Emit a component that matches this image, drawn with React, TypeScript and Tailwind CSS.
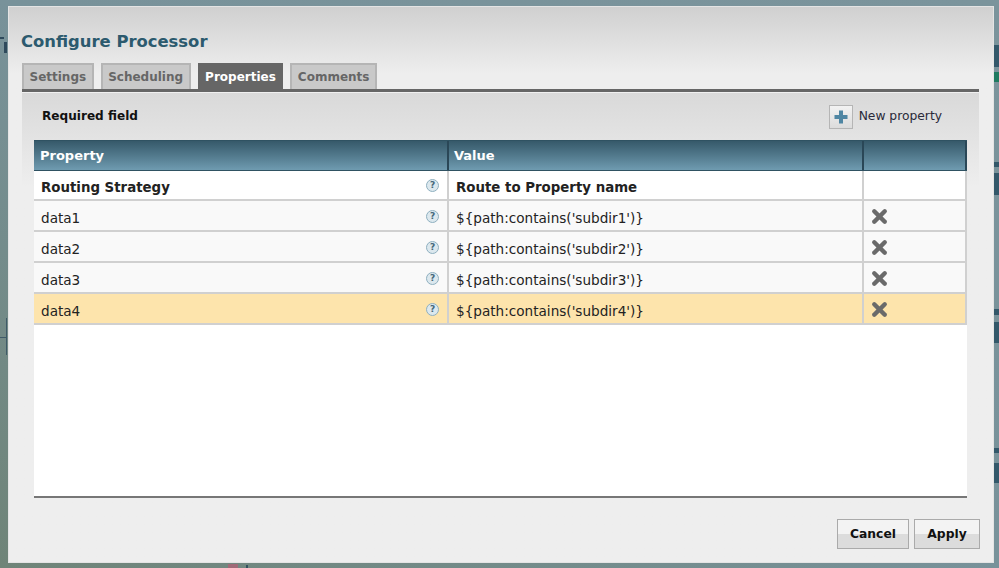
import React from 'react';
import { X } from 'lucide-react';

const font = "font-['DejaVu_Sans',sans-serif]";

const rows = [
  { name: 'data1', value: "${path:contains('subdir1')}" },
  { name: 'data2', value: "${path:contains('subdir2')}" },
  { name: 'data3', value: "${path:contains('subdir3')}" },
  { name: 'data4', value: "${path:contains('subdir4')}", selected: true },
];

const tabs = ['Settings', 'Scheduling', 'Properties', 'Comments'];

// bits of the flow canvas that stick out from behind the dialog
const canvasBits = [
  'left-[994px] top-[45px] h-[22px] w-[5px] bg-[#33586a]',
  'left-[994px] top-[72px] h-[10px] w-[5px] bg-[#1f7a60]',
  'left-[994px] top-[162px] h-[5px] w-[5px] bg-[#33586a]',
  'left-[994px] top-[173px] h-[22px] w-[5px] bg-[#33586a]',
  'left-[994px] top-[309px] h-[6px] w-[5px] bg-[#33586a]',
  'left-[994px] top-[322px] h-[21px] w-[5px] bg-[#33586a]',
  'left-[994px] top-[448px] h-[5px] w-[5px] bg-[#33586a]',
  'left-[994px] top-[463px] h-[20px] w-[5px] bg-[#33586a]',
  'left-[6px] top-[318px] h-[37px] w-[1px] bg-[#3f5a68]',
  'left-0 top-[337px] h-[1px] w-[6px] bg-[#3f5a68]',
  'left-[4px] top-[42px] h-[11px] w-[3px] bg-[#2f4a5c]',
  'left-0 top-[37px] h-[2px] w-[4px] bg-[#2f4a5c]',
  'left-[228px] top-[564px] h-[4px] w-[10px] bg-[#a06a78]',
  'left-[246px] top-[565px] h-[3px] w-[2px] bg-[#33505e]',
];

const HelpIcon = () => (
  <span className="flex h-[13px] w-[13px] items-center justify-center rounded-full border border-[#8fb0c0] bg-[#dce8ee] text-[9px] font-bold leading-none text-[#45687a]">
    ?
  </span>
);

const Row = ({ name, value, selected, bold }: { name: string; value: string; selected?: boolean; bold?: boolean }) => (
  <div className={`flex border-b-2 border-[#d0d0d0] text-[#222] ${selected ? 'bg-[#fde4ac]' : bold ? 'bg-white' : 'bg-[#f9f9f9]'} ${bold ? 'h-[30px] text-[13.35px] font-bold' : 'h-[31px] text-[13.6px]'}`}>
    <div className="flex w-[413px] items-center justify-between pl-[7px] pr-[8px]">
      <span className="mt-[6px]">{name}</span>
      <span className={bold ? 'mt-[1px]' : 'mt-[1px]'}><HelpIcon /></span>
    </div>
    <div className="flex w-[415px] items-center border-l-2 border-[#d0d0d0] pl-[7px]">
      <span className="mt-[6px]">{value}</span>
    </div>
    <div className="flex flex-1 items-center border-x-2 border-[#d0d0d0] pl-[5px]">
      {!bold && <X size={21} strokeWidth={5} className="mt-[1px] text-[#6a6a6a]" />}
    </div>
  </div>
);

export default function App() {
  return (
    <div className={`relative h-[568px] w-[999px] overflow-hidden bg-gradient-to-bl from-[#7b949c] via-[#78929a] to-[#6f8478] pb-[5px] pl-[8px] pr-[5px] pt-[6px] ${font}`}>
      {canvasBits.map((bit) => (
        <div key={bit} className={`absolute ${bit}`} />
      ))}
      <div className="relative flex h-[557px] flex-col border border-[#e4e4e4] bg-[#eeeeee] bg-gradient-to-b from-[#d0d0d0] to-[#eeeeee] to-[12%] px-[13px]">
        <h1 className="-ml-[1px] mt-[24px] h-[32px] text-[16.4px] font-bold leading-[22px] text-[#2c5a6e]">Configure Processor</h1>

        <div className="flex h-[26px] gap-[7px]">
          {tabs.map((tab) => (
            <div
              key={tab}
              className={`flex items-center border-2 border-b-0 px-[5.5px] text-[12px] font-bold ${tab === 'Properties' ? 'border-[#666] bg-[#666] text-white' : 'border-[#b5b5b5] bg-[#c9c9c9] text-[#666]'}`}
            >
              {tab}
            </div>
          ))}
        </div>
        <div className="h-[3px] w-[957px] bg-[#666]" />

        <div className="flex h-[427px] w-[957px] flex-col border-t border-[#f0f0f0] bg-gradient-to-b from-[#d9d9d9] to-[#eeeeee] to-[22%] px-[12px]">
          <div className="flex h-[47px] items-center justify-between pl-[8px] pr-[25px]">
            <span className="text-[12.1px] font-bold text-[#111]">Required field</span>
            <div className="flex items-center gap-[6px]">
              <span className="flex h-[24px] w-[24px] items-center justify-center border border-[#b5b5b5] bg-gradient-to-b from-[#f2f2f2] to-[#dcdcdc]">
                <svg width="16" height="16" viewBox="0 0 16 16">
                  <path d="M6 1.5h4v4.5h4.5v4H10v4.5H6V10H1.5V6H6z" fill="#4f86a3" />
                </svg>
              </span>
              <span className="text-[12.3px] text-[#2a2a3a]">New property</span>
            </div>
          </div>

          <div className="flex h-[358px] flex-col border-b-2 border-[#777] bg-white">
            <div className="flex h-[31px] border-y border-[#2f5262] bg-gradient-to-b from-[#36596a] to-[#6f9bb0] text-[13px] font-bold text-white">
              <div className="flex w-[413px] items-center pl-[6px]">Property</div>
              <div className="flex w-[415px] items-center border-l-2 border-[#2a4757] pl-[5px]">Value</div>
              <div className="flex-1 border-x-2 border-[#2a4757]" />
            </div>
            <Row name="Routing Strategy" value="Route to Property name" bold />
            {rows.map((row) => (
              <Row key={row.name} name={row.name} value={row.value} selected={row.selected} />
            ))}
          </div>
        </div>

        <div className="flex flex-1 items-start justify-end gap-[5px]">
          <button className="h-[30px] w-[72px] border border-[#aaa] bg-gradient-to-b from-[#f3f3f3] from-50% to-[#dcdcdc] to-50% text-[12.3px] font-bold text-[#111]">Cancel</button>
          <button className="h-[30px] w-[66px] border border-[#aaa] bg-gradient-to-b from-[#f3f3f3] from-50% to-[#dcdcdc] to-50% text-[12.3px] font-bold text-[#111]">Apply</button>
        </div>
      </div>
    </div>
  );
}
